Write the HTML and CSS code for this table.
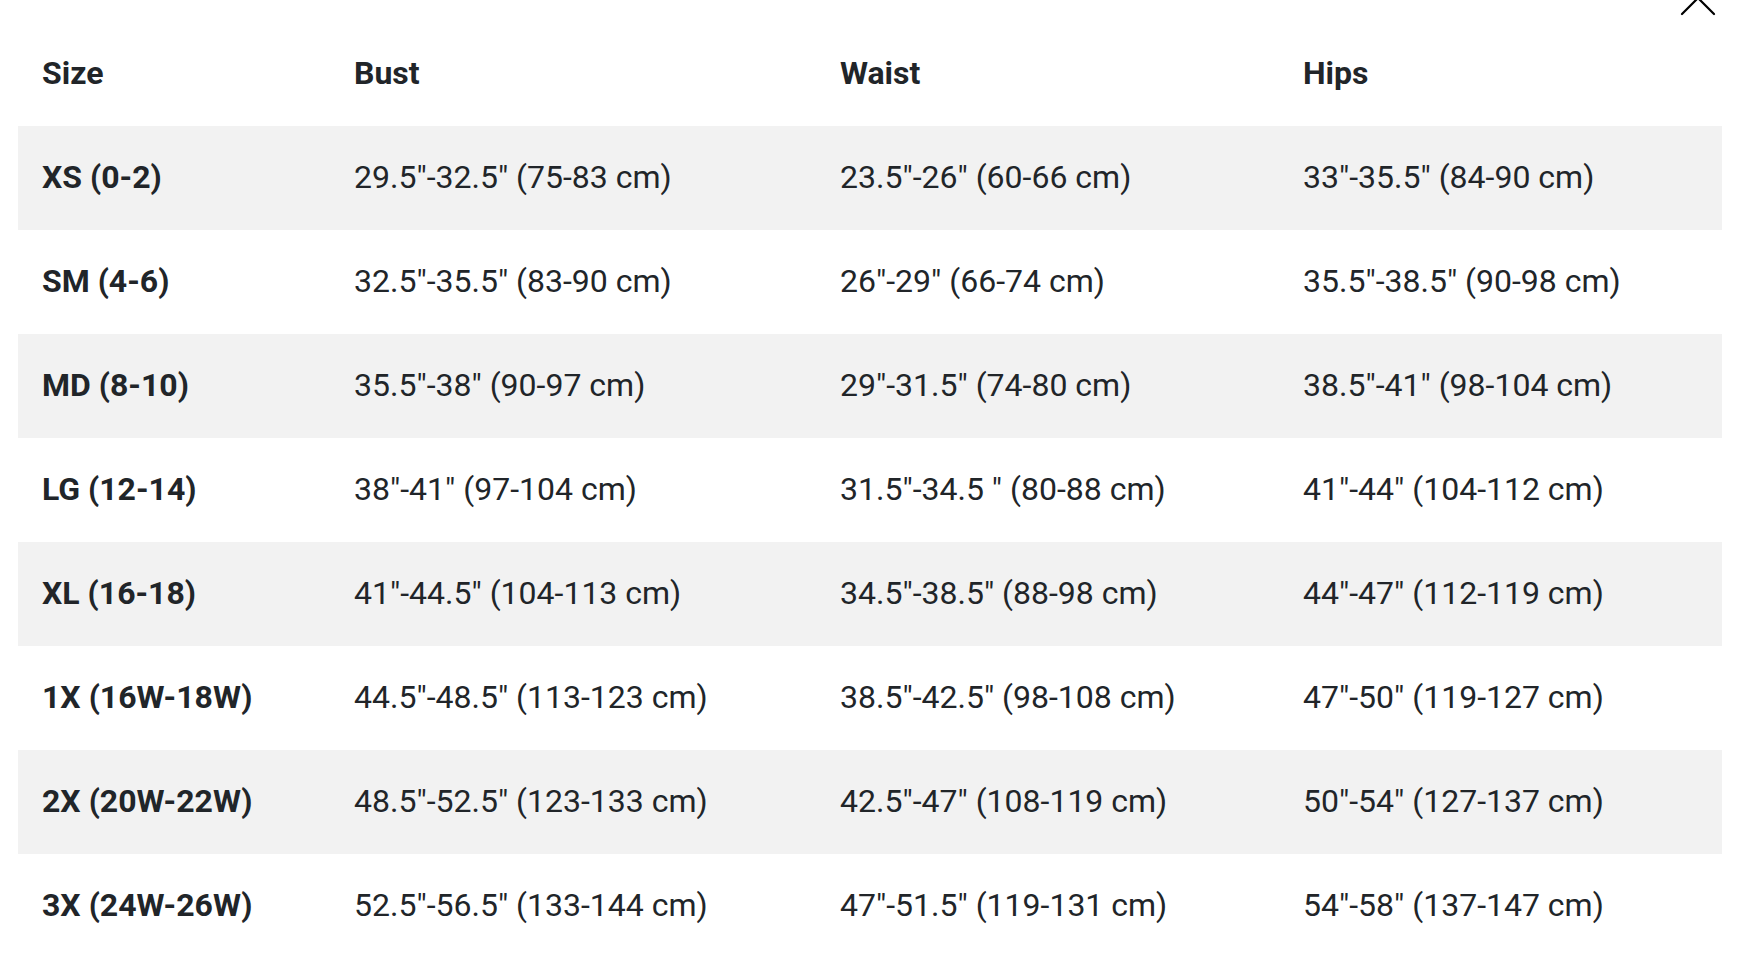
FILE: index.html
```html
<!DOCTYPE html>
<html lang="en">
<head>
<meta charset="utf-8">
<title>Size Chart</title>
<link rel="stylesheet" href="styles.css">
</head>
<body>
<div class="modal">
  <button class="close" aria-label="Close">
    <svg width="48" height="48" viewBox="0 0 48 48"><path d="M8 8 L40 40 M40 8 L8 40" stroke="#000" stroke-width="2.2" fill="none" stroke-linecap="round"/></svg>
  </button>
  <table class="chart">
    <colgroup>
      <col class="c-size"><col class="c-bust"><col class="c-waist"><col class="c-hips">
    </colgroup>
    <thead>
      <tr><th>Size</th><th>Bust</th><th>Waist</th><th>Hips</th></tr>
    </thead>
    <tbody>
      <tr><th>XS (0-2)</th><td>29.5"-32.5" (75-83 cm)</td><td>23.5"-26" (60-66 cm)</td><td>33"-35.5" (84-90 cm)</td></tr>
      <tr><th>SM (4-6)</th><td>32.5"-35.5" (83-90 cm)</td><td>26"-29" (66-74 cm)</td><td>35.5"-38.5" (90-98 cm)</td></tr>
      <tr><th>MD (8-10)</th><td>35.5"-38" (90-97 cm)</td><td>29"-31.5" (74-80 cm)</td><td>38.5"-41" (98-104 cm)</td></tr>
      <tr><th>LG (12-14)</th><td>38"-41" (97-104 cm)</td><td>31.5"-34.5 " (80-88 cm)</td><td>41"-44" (104-112 cm)</td></tr>
      <tr><th>XL (16-18)</th><td>41"-44.5" (104-113 cm)</td><td>34.5"-38.5" (88-98 cm)</td><td>44"-47" (112-119 cm)</td></tr>
      <tr><th>1X (16W-18W)</th><td>44.5"-48.5" (113-123 cm)</td><td>38.5"-42.5" (98-108 cm)</td><td>47"-50" (119-127 cm)</td></tr>
      <tr><th>2X (20W-22W)</th><td>48.5"-52.5" (123-133 cm)</td><td>42.5"-47" (108-119 cm)</td><td>50"-54" (127-137 cm)</td></tr>
      <tr><th>3X (24W-26W)</th><td>52.5"-56.5" (133-144 cm)</td><td>47"-51.5" (119-131 cm)</td><td>54"-58" (137-147 cm)</td></tr>
    </tbody>
  </table>
</div>
</body>
</html>
```
FILE: styles.css
```css
html, body {
  margin: 0;
  padding: 0;
  background: #fff;
}
body {
  font-family: Roboto, "Liberation Sans", Arial, sans-serif;
  color: #212529;
  overflow: hidden;
}
.modal {
  position: relative;
  padding: 22px 28px 0 18px;
}
.close {
  position: absolute;
  top: -26px;
  right: 28px;
  width: 48px;
  height: 48px;
  padding: 0;
  border: 0;
  background: transparent;
}
.close svg {
  display: block;
}
.chart {
  width: 1704px;
  border-collapse: collapse;
  table-layout: fixed;
  font-size: 32px;
  line-height: 1.2;
}
.c-size { width: 312px; }
.c-bust { width: 486px; }
.c-waist { width: 463px; }
.c-hips { width: 443px; }
.chart th,
.chart td {
  height: 104px;
  padding: 0 0 2px 24px;
  text-align: left;
  vertical-align: middle;
  white-space: nowrap;
  box-sizing: border-box;
}
.chart th {
  font-weight: 700;
}
.chart td {
  font-weight: 400;
}
.chart tbody tr:nth-child(odd) {
  background: #f2f2f2;
}
```
